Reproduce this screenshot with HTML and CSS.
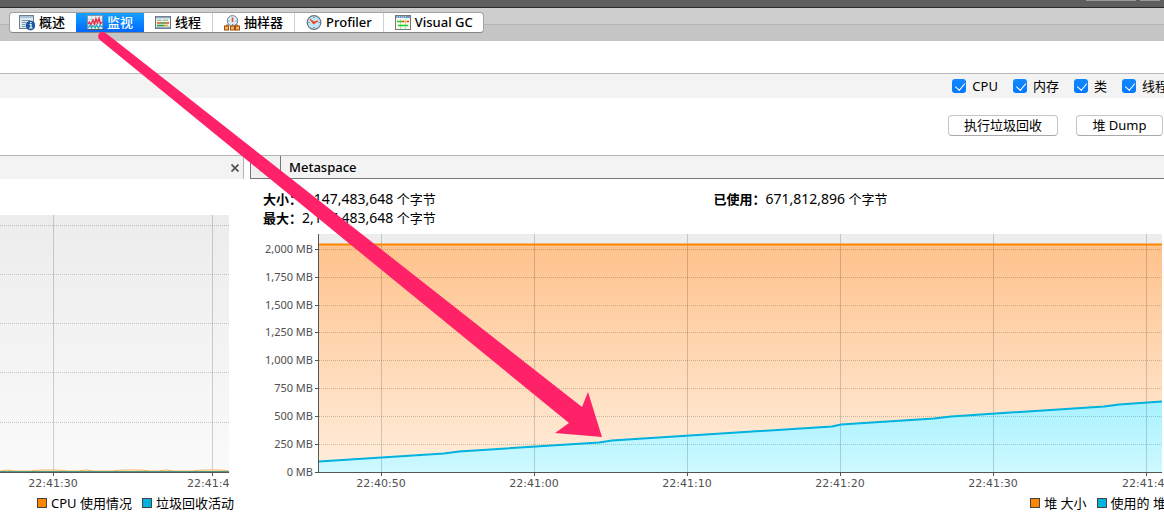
FILE: index.html
```html
<!DOCTYPE html>
<html lang="zh-CN">
<head>
<meta charset="utf-8">
<title>Monitor</title>
<link rel="stylesheet" href="styles.css">
</head>
<body>
<div class="app">
<header class="titlebar"><span class="stub wide"></span><span class="stub"></span></header>
<nav class="toolbar">
  <div class="tabs">
    <button class="tab" type="button">
      <svg class="icon" width="16" height="16" viewBox="0 0 16 16"><rect x=".5" y=".5" width="14" height="13" fill="#dce9f3" stroke="#70808e"/><path d="M1 2h13" stroke="#a9c3d8" stroke-width="2"/><path d="M3 5.500h8M3 7.500h4M3 9.500h3M3 11.500h3" stroke="#7d96aa"/><circle cx="11.500" cy="10.500" r="4.500" fill="#1558a8" stroke="#0b3d80" stroke-width=".6"/><path d="M10.500 9.500h1.500v3.500M10 13h3.500" fill="none" stroke="#fff" stroke-width="1.200"/><path d="M11 7.600h1.500" stroke="#fff" stroke-width="1.300"/></svg>
      <span>概述</span></button>
    <button class="tab active" type="button">
      <svg class="icon" width="16" height="16" viewBox="0 0 16 16"><rect x=".5" y=".5" width="15" height="14" fill="#e8eef2" stroke="#8796a5"/><path d="M4.500 1v13M8.500 1v13M12.500 1v13M1 4.500h14M1 8.500h14" stroke="#b7c4cf" stroke-width=".6"/><path d="M1 9l1.500-2L4 9.500 6 5l1.500 4L9 4l1.500 4L12 3.500l1.500 5L15 7" fill="none" stroke="#ed2944" stroke-width="1.400"/><path d="M1 13l2-3 1.500 3L6 10.500l2 2.500 1.500-3 2 3 1.500-3 2 2" fill="none" stroke="#16a3bd" stroke-width="1.200"/><path d="M0 14.500h16" stroke="#555"/></svg>
      <span>监视</span></button>
    <button class="tab" type="button">
      <svg class="icon" width="16" height="16" viewBox="0 0 16 16"><rect x=".5" y="1.500" width="15" height="12" fill="#eef4e8" stroke="#687785"/><path d="M1 2.500h14M1 12.500h14" stroke="#8ca9c2" stroke-width="1.500"/><path d="M2 5.200h5M8 5.200h5" stroke="#7fae8f"/><path d="M2 8h4M10 8h4" stroke="#e4511d" stroke-width="1.500"/><path d="M6 8h4M2 10.500h7" stroke="#289c3d" stroke-width="1.300"/><path d="M9 10.500h4" stroke="#e0ae2d" stroke-width="1.300"/></svg>
      <span>线程</span></button>
    <button class="tab" type="button">
      <svg class="icon" width="16" height="16" viewBox="0 0 16 16"><circle cx="8.500" cy="5.800" r="5.200" fill="#d9effb" stroke="#6d7d88"/><path d="M8.500 2.500v4.500" stroke="#e4511d" stroke-width="1.600"/><path d="M4.500 6h1M11.500 6h1M8.500 9v1" stroke="#55738c"/><path d="M2.500 12v-2H5M13.500 12v-2H11" fill="none" stroke="#9a4d0f"/><g fill="#f9b45c" stroke="#9a4d0f"><rect x=".5" y="11" width="4" height="4"/><rect x="6.500" y="11" width="4" height="4"/><rect x="11.500" y="11" width="4" height="4"/></g></svg>
      <span>抽样器</span></button>
    <button class="tab" type="button">
      <svg class="icon" width="16" height="16" viewBox="0 0 16 16"><circle cx="8" cy="7.500" r="6.800" fill="#bfe5f8" stroke="#65747e" stroke-width="1.200"/><path d="M8 2v1M8 12v1M2.500 7.500h1M12.500 7.500h1" stroke="#3a6d8c"/><path d="M4 4l3.500 5L12 6 8 7z" fill="#f24b1b" stroke="#f24b1b"/></svg>
      <span>Profiler</span></button>
    <button class="tab" type="button">
      <svg class="icon" width="16" height="16" viewBox="0 0 16 16"><rect x=".5" y=".5" width="15" height="14" fill="#f8faf0" stroke="#777"/><path d="M1 2h14" stroke="#7197c4" stroke-width="2"/><path d="M2 2h1M4 2h1M6 2h1M8 2h1M10 2h1" stroke="#dce8f5"/><path d="M5.500 4v10M10.500 4v10" stroke="#ccd5b9"/><path d="M2 6.500h5M3 10.500h10" stroke="#18d321" stroke-width="1.500"/><path d="M7 6.500h2M12 6.500h2" stroke="#e7361f" stroke-width="1.500"/><path d="M9 6.500h3" stroke="#f0b42a" stroke-width="1.500"/></svg>
      <span>Visual GC</span></button>
  </div>
</nav>
<div class="spacer"></div>
<form class="checks">
  <label class="check"><input type="checkbox" checked><span>CPU</span></label>
  <label class="check"><input type="checkbox" checked><span>内存</span></label>
  <label class="check"><input type="checkbox" checked><span>类</span></label>
  <label class="check"><input type="checkbox" checked><span>线程</span></label>
</form>
<div class="actions">
  <button class="action gc" type="button">执行垃圾回收</button>
  <button class="action dump" type="button">堆 Dump</button>
</div>
<main class="panels">
  <section class="panel">
    <div class="cpu-head"><button class="close" type="button" aria-label="关闭"><svg width="8" height="8" viewBox="0 0 8 8"><path d="M.5.5l7 7M7.500.5l-7 7" stroke="#555" stroke-width="1.800"/></svg></button></div>
    <svg class="cpu-chart" width="229" height="278">
      <defs><linearGradient id="bg" x1="0" y1="0" x2="0" y2="1"><stop offset="0" stop-color="#ececec"/><stop offset="1" stop-color="#fafafa"/></linearGradient></defs>
      <rect width="229" height="257" fill="url(#bg)"/>
      <path class="dots" d="M0 10.500h229M0 59.500h229M0 108.500h229M0 157.500h229M0 207.500h229"/>
      <path class="grid" d="M53.500 0v257M212.500 0v257"/>
      <path d="M0 256q8-2 14 0h16q8-1 14-1h10q8 0 14 1h10q8-2 16 0h18q8-1 14-1h10q8 0 14 1h8q8-2 16 0h18q8-1 14-1h10q8 0 13 1" fill="none" stroke="#ffae57"/>
      <path d="M0 256.500h229" stroke="#4c9c86"/>
      <path class="axis" d="M0 257.500h229M53.500 258v3M212.500 258v3"/>
      <text class="tick" x="53" y="272" text-anchor="middle">22:41:30</text>
      <text class="tick" x="187" y="272">22:41:4</text>
    </svg>
    <div class="legend cpu-legend">
      <span class="key"><i class="swatch orange"></i>CPU 使用情况</span>
      <span class="key"><i class="swatch blue"></i>垃圾回收活动</span>
    </div>
  </section>
  <section class="panel">
    <div class="meta-head"><button class="back" type="button">堆</button><h2 class="title">Metaspace</h2></div>
    <div class="stats">
      <div class="stat"><b>大小：</b><span class="number">2,147,483,648</span> 个字节</div>
      <div class="stat"><b>已使用：</b><span class="number">671,812,896</span> 个字节</div>
      <div class="stat"><b>最大：</b><span class="number">2,147,483,648</span> 个字节</div>
    </div>
    <svg class="meta-chart" width="100%" height="259">
      <defs>
        <linearGradient id="heap" x1="0" y1="0" x2="0" y2="1"><stop offset="0" stop-color="#ffc28c"/><stop offset="1" stop-color="#ffeedd"/></linearGradient>
        <linearGradient id="used" x1="0" y1="0" x2="0" y2="1"><stop offset="0" stop-color="#a8f2ff"/><stop offset="1" stop-color="#cef9ff"/></linearGradient>
      </defs>
      <svg class="plot" x="69" width="843" height="239">
        <rect width="100%" height="238" fill="#ededed"/>
        <rect y="11" width="100%" height="227" fill="url(#heap)"/>
        <path d="M0 227.500L125 219.500L140 217.500L280 208.500L293 206.500L513 192.500L522 190.500L615 184.500L632 182.500L785 172.500L800 170.500L843 167.500V238H0z" fill="url(#used)"/>
        <path class="dots" d="M0 15.500h843M0 43.500h843M0 71.500h843M0 98.500h843M0 126.500h843M0 154.500h843M0 182.500h843M0 210.500h843"/>
        <path class="grid" d="M62.500 0v238M215.500 0v238M368.500 0v238M521.500 0v238M674.500 0v238M827.500 0v238"/>
        <path d="M0 10.500h843" stroke="#ff8500" stroke-width="2"/>
        <path d="M0 227.500L125 219.500L140 217.500L280 208.500L293 206.500L513 192.500L522 190.500L615 184.500L632 182.500L785 172.500L800 170.500L843 167.500" fill="none" stroke="#00b2de" stroke-width="2"/>
      </svg>
      <path class="axis" d="M68.500 0v239M65 238.500h847M65 15.500h3M65 43.500h3M65 71.500h3M65 98.500h3M65 126.500h3M65 154.500h3M65 182.500h3M65 210.500h3M131.500 239v3M284.500 239v3M437.500 239v3M590.500 239v3M743.500 239v3M896.500 239v3"/>
      <g class="tick size" text-anchor="end"><text x="63" y="19">2,000 MB</text><text x="63" y="47">1,750 MB</text><text x="63" y="75">1,500 MB</text><text x="63" y="102">1,250 MB</text><text x="63" y="130">1,000 MB</text><text x="63" y="158">750 MB</text><text x="63" y="186">500 MB</text><text x="63" y="214">250 MB</text><text x="63" y="242">0 MB</text></g>
      <g class="tick" text-anchor="middle"><text x="131" y="253">22:40:50</text><text x="284" y="253">22:41:00</text><text x="437" y="253">22:41:10</text><text x="590" y="253">22:41:20</text><text x="743" y="253">22:41:30</text></g>
      <text class="tick" x="872" y="253">22:41:4</text>
    </svg>
    <div class="legend meta-legend">
      <span class="key"><i class="swatch orange"></i>堆 大小</span>
      <span class="key"><i class="swatch blue"></i>使用的 堆</span>
    </div>
  </section>
</main>
<svg class="arrow" width="620" height="450" viewBox="0 0 620 450"><path d="M98.500 38.500Q97 33 102 32Q104 31.500 107 34L582 407L588 392L602 437L555 433L569 423L100 40z" fill="#ff2268"/></svg>
</div>
</body>
</html>
```
FILE: styles.css
```css
* { box-sizing: border-box; }
body { margin: 0; background: #fff; color: #000; font: 13px/19px "Noto Sans", "Noto Sans CJK SC", sans-serif; }
button { font: inherit; color: inherit; margin: 0; padding: 0; }
.app { position: relative; overflow: hidden; min-height: 100vh; white-space: nowrap; }
.titlebar { display: flex; justify-content: flex-end; gap: 4px; height: 8px; padding-right: 4px; background: #5e5e5e; border-bottom: 1px solid #2c2c2c; }
.stub { width: 20px; height: 1px; background: #999; }
.wide { width: 50px; }
.toolbar { height: 33px; padding: 4px 9px; background: linear-gradient(#cecece 16px, #b5b5b5 16px, #b5b5b5 17px, #c5c5c5 17px); }
.tabs { display: inline-flex; height: 21px; background: #fff; border: 1px solid #a2a2a2; border-bottom-color: #858585; border-radius: 4px; overflow: hidden; }
.tab { display: flex; align-items: center; gap: 4px; padding: 0 11px; border: 0; border-right: 1px solid #d0d0d0; background: transparent; font-weight: 500; }
.tab:first-child { padding-left: 9px; border-right: 0; }
.tab:last-child { padding-right: 10px; border-right: 0; }
.tab.active { border-right: 0; color: #fff; background: linear-gradient(#16a1ff, #0068ff); }
.icon { flex: none; }
.spacer { height: 32px; }
.checks { display: flex; justify-content: flex-end; gap: 15px; height: 25px; align-items: center; margin-right: -4px; border-top: 1px solid #b9b9b9; background: #f3f3f3; }
.check { display: flex; align-items: center; gap: 6px; }
.check input { appearance: none; position: relative; width: 14px; height: 14px; margin: 0; border-radius: 3px; background: #aaa; }
.check input:checked { background: linear-gradient(#1389ff, #0078ff); }
.check input:checked::after { content: ""; position: absolute; left: 5px; top: 2px; width: 5px; height: 8px; border: solid #fff; border-width: 0 1px 1px 0; transform: rotate(40deg); }
.actions { display: flex; justify-content: flex-end; gap: 18px; height: 57px; padding: 17px 1px 0 0; }
.action { height: 21px; border: 1px solid #c6c6c6; border-bottom-color: #a9a9a9; border-radius: 4px; background: #fff; line-height: 19px; }
.gc { width: 110px; }
.dump { width: 87px; }
.panels { display: grid; grid-template-columns: 244px minmax(0, 1fr); gap: 6px; }
.cpu-head { display: flex; justify-content: flex-end; align-items: center; height: 24px; padding-right: 4px; border-top: 1px solid #b4b4b4; border-right: 1px solid #b4b4b4; background: #f3f3f3; }
.close { display: flex; border: 0; background: none; }
.cpu-chart { display: block; margin-top: 36px; }
.meta-head { display: flex; align-items: stretch; height: 24px; border-top: 1px solid #b4b4b4; border-bottom: 1px solid #777; background: #f3f3f3; }
.back { width: 31px; border: solid #777; border-width: 0 1px; background: #f0f0f0; color: #999; }
.title { margin: 0 0 0 8px; font-weight: 500; line-height: 23px; font-size: 13px; }
.stats { display: grid; grid-template-columns: 1fr 1fr; height: 55px; padding: 10px 0 0 13px; align-content: start; }
.stat { height: 19px; }
.number { font-size: 14px; }
.meta-chart { display: block; }
.dots { fill: none; stroke: #000; stroke-opacity: .2; stroke-dasharray: 1 1; }
.grid { fill: none; stroke: #000; stroke-opacity: .17; }
.axis { fill: none; stroke: #555; }
.tick { fill: #505050; font: 11px "DejaVu Sans", sans-serif; }
.size { font-family: "Noto Sans", sans-serif; }
.legend { display: flex; gap: 10px; height: 20px; align-items: center; }
.cpu-legend { padding-left: 37px; }
.meta-legend { justify-content: flex-end; margin-right: -2px; }
.key { display: flex; align-items: center; }
.swatch { width: 10px; height: 10px; margin-right: 4px; border: 1px solid #444; }
.orange { background: #ff8500; }
.blue { background: #00b2de; }
.arrow { position: absolute; left: 0; top: 0; pointer-events: none; }
```
